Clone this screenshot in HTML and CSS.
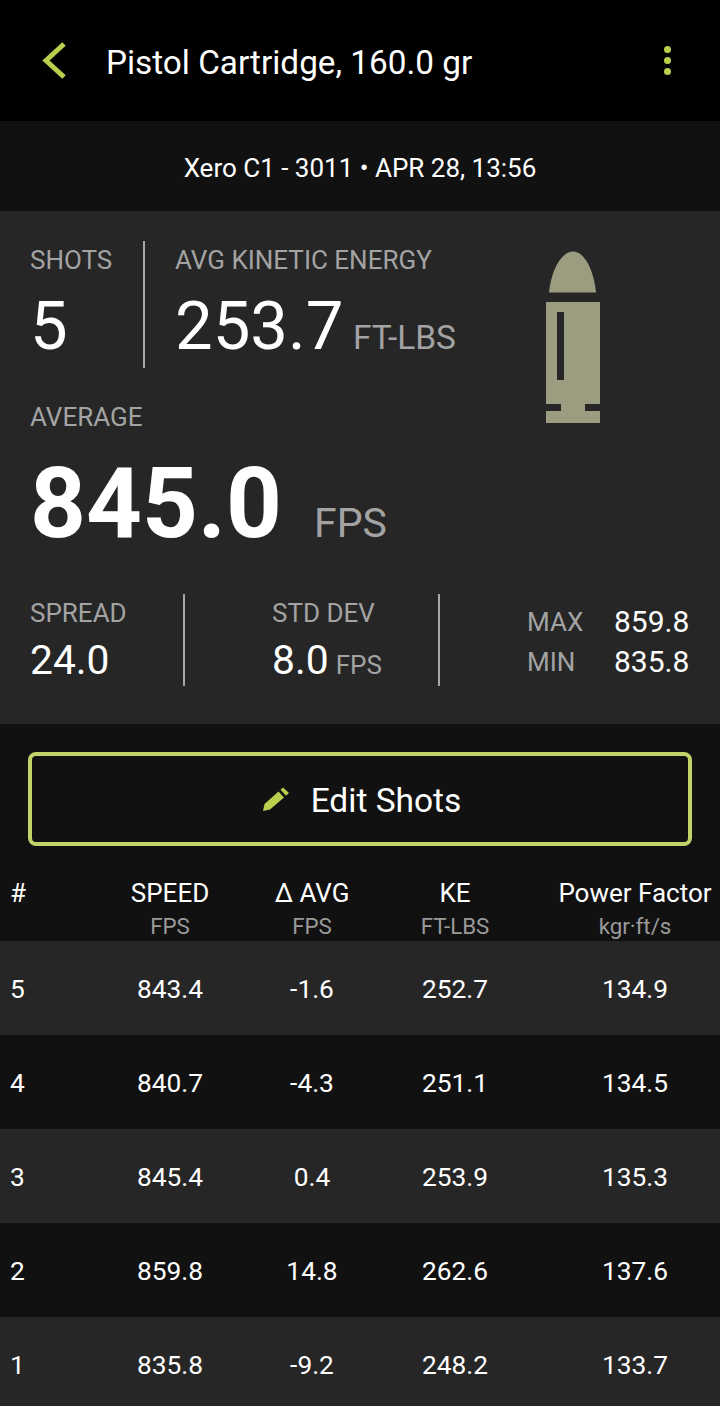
FILE: index.html
```html
<!DOCTYPE html>
<html lang="en">
<head>
    <meta charset="UTF-8">
    <meta name="viewport" content="width=device-width, initial-scale=1.0">
    <title>Pistol Cartridge, 160.0 gr</title>
    <link rel="stylesheet" href="styles.css">
</head>
<body>
    <!-- Top bar -->
    <header class="topbar">
        <svg class="back-icon" viewBox="0 0 24 37" aria-hidden="true"><path d="M22 2 L4 18.5 L22 35" /></svg>
        <h1 class="topbar-title">Pistol Cartridge, 160.0 gr</h1>
        <div class="menu-dots"><span></span><span></span><span></span></div>
    </header>

    <div class="session">Xero C1 - 3011 • APR 28, 13:56</div>

    <!-- Summary panel -->
    <section class="summary">
        <div class="summary-top">
            <div class="summary-main">
                <div class="headline-row">
                    <div class="shots-block">
                        <div class="label">SHOTS</div>
                        <div class="headline-value">5</div>
                    </div>
                    <div class="energy-block">
                        <div class="label">AVG KINETIC ENERGY</div>
                        <div class="headline-value">253.7 <span class="energy-unit">FT-LBS</span></div>
                    </div>
                </div>
                <div class="label average-label">AVERAGE</div>
                <div class="average-value">845.0<span class="average-unit">FPS</span></div>
            </div>
            <svg class="bullet" viewBox="0 0 54 173" aria-hidden="true">
                <path d="M3 41.5 C5 20 15 .5 27 .5 C39 .5 48 20 50 41.5 Z" />
                <path fill-rule="evenodd" d="M0 51 H54 V153 H39 V160 H54 V172 H0 V160 H15 V153 H0 Z M11 61 V129 H18 V61 Z" />
            </svg>
        </div>
        <div class="stats-row">
            <div class="stat stat-spread">
                <div class="label">SPREAD</div>
                <div class="stat-value">24.0</div>
            </div>
            <div class="stat stat-dev">
                <div class="label">STD DEV</div>
                <div class="stat-value">8.0 <span class="stat-unit">FPS</span></div>
            </div>
            <div class="minmax">
                <span class="minmax-label">MAX</span><span class="minmax-value">859.8</span>
                <span class="minmax-label">MIN</span><span class="minmax-value">835.8</span>
            </div>
        </div>
    </section>

    <div class="edit-wrap">
        <button class="edit-btn" type="button">
            <svg class="pencil" viewBox="0 0 26 24" aria-hidden="true">
                <path d="M0 24 L1.5 17 L15.5 4.5 L21 10.5 L7 22.5 Z M17.5 2.8 L20 .5 L26 6 L23 8.8 Z" />
            </svg>
            Edit Shots
        </button>
    </div>

    <!-- Shots table -->
    <div class="shot-table">
        <div class="table-head">
            <div class="col-num">#</div>
            <div>SPEED<small>FPS</small></div>
            <div>Δ AVG<small>FPS</small></div>
            <div>KE<small>FT-LBS</small></div>
            <div class="col-pf">Power Factor<small>kgr·ft/s</small></div>
        </div>
        <div class="table-row">
            <div class="col-num">5</div><div>843.4</div><div>-1.6</div><div>252.7</div><div class="col-pf">134.9</div>
        </div>
        <div class="table-row">
            <div class="col-num">4</div><div>840.7</div><div>-4.3</div><div>251.1</div><div class="col-pf">134.5</div>
        </div>
        <div class="table-row">
            <div class="col-num">3</div><div>845.4</div><div>0.4</div><div>253.9</div><div class="col-pf">135.3</div>
        </div>
        <div class="table-row">
            <div class="col-num">2</div><div>859.8</div><div>14.8</div><div>262.6</div><div class="col-pf">137.6</div>
        </div>
        <div class="table-row">
            <div class="col-num">1</div><div>835.8</div><div>-9.2</div><div>248.2</div><div class="col-pf">133.7</div>
        </div>
    </div>
</body>
</html>
```

FILE: styles.css
```css
html, body {
    height: 1406px;
    overflow: hidden;
}

body {
    margin: 0;
    font-family: Roboto, "Liberation Sans", sans-serif;
    background-color: #111;
    color: #fff;
}

/* Top bar */
.topbar {
    display: flex;
    align-items: center;
    height: 121px;
    padding: 0 49px 0 42px;
    box-sizing: border-box;
    background-color: #000;
}

.back-icon {
    width: 24px;
    height: 37px;
    fill: none;
    stroke: #b9d04e;
    stroke-width: 5;
}

.topbar-title {
    flex: 1;
    margin: 4px 0 0 40px;
    font-size: 33.3px;
    font-weight: 400;
}

.menu-dots {
    display: flex;
    flex-direction: column;
    gap: 4px;
}

.menu-dots span {
    width: 7px;
    height: 7px;
    border-radius: 50%;
    background-color: #b9d04e;
}

.session {
    height: 90px;
    padding-top: 2px;
    box-sizing: border-box;
    line-height: 90px;
    text-align: center;
    font-size: 26px;
    background-color: #111;
}

/* Summary panel */
.summary {
    height: 513px;
    box-sizing: border-box;
    padding: 30px 30px 0;
    background-color: #262626;
}

.summary-top {
    display: flex;
    height: 353px;
}

.summary-main {
    width: 516px;
}

.label {
    font-size: 26px;
    line-height: 38px;
    color: #a3a3a3;
}

.headline-row {
    display: flex;
    height: 127px;
}

.shots-block {
    width: 113px;
    border-right: 2px solid #a8a8a8;
}

.energy-block {
    padding-left: 30px;
}

.headline-value {
    margin-top: 8px;
    font-size: 67px;
    line-height: 78px;
}

.energy-unit {
    margin-left: -7px;
    font-size: 33.5px;
    color: #a3a3a3;
}

.average-label {
    margin-top: 30px;
}

.average-value {
    margin-top: 12px;
    font-size: 97.5px;
    font-weight: 700;
    line-height: 112px;
}

.average-unit {
    margin-left: 32px;
    font-size: 41px;
    font-weight: 400;
    color: #a3a3a3;
}

.bullet {
    width: 54px;
    height: 173px;
    margin-top: 10px;
    fill: #9c9c80;
}

.stats-row {
    display: flex;
    height: 92px;
}

.stat-spread {
    width: 153px;
    border-right: 2px solid #a8a8a8;
}

.stat-dev {
    width: 166px;
    padding-left: 87px;
    border-right: 2px solid #a8a8a8;
}

.stats-row .label {
    padding-top: 1px;
    line-height: 36px;
}

.stat-value {
    margin-top: 1px;
    font-size: 40.8px;
    line-height: 56px;
}

.stat-unit {
    margin-left: -3px;
    font-size: 26px;
    color: #a3a3a3;
}

.minmax {
    display: grid;
    grid-template-columns: 87px auto;
    align-content: center;
    padding: 4px 0 0 87px;
    row-gap: 6px;
    line-height: 34px;
}

.minmax-label {
    font-size: 26px;
    color: #a3a3a3;
}

.minmax-value {
    font-size: 30px;
}

/* Edit button */
.edit-wrap {
    padding: 28px 28px 0;
}

.edit-btn {
    display: flex;
    align-items: center;
    justify-content: center;
    gap: 22px;
    width: 100%;
    height: 94px;
    padding: 2px 0 0 2px;
    border: 4px solid #c1d46a;
    border-radius: 8px;
    background-color: #111;
    color: #fff;
    font-family: inherit;
    font-size: 33.5px;
}

.pencil {
    width: 26px;
    height: 24px;
    margin-left: 2px;
    margin-top: -3px;
    fill: #b9d04e;
}

/* Shots table */
.table-head,
.table-row {
    display: grid;
    grid-template-columns: 100px 140px 144px 142px 1fr;
    text-align: center;
}

.table-head {
    height: 95px;
    box-sizing: border-box;
    padding-top: 31px;
    font-size: 26px;
    line-height: 32px;
}

.table-head small {
    display: block;
    margin-top: 1px;
    font-size: 22.3px;
    color: #9a9a9a;
}

.table-row {
    height: 94px;
    padding-top: 2px;
    box-sizing: border-box;
    align-items: center;
    font-size: 26.3px;
}

.table-row:nth-child(even) {
    background-color: #262626;
}

.col-num {
    padding-left: 10px;
    text-align: left;
}

.col-pf {
    padding-left: 24px;
}
```
